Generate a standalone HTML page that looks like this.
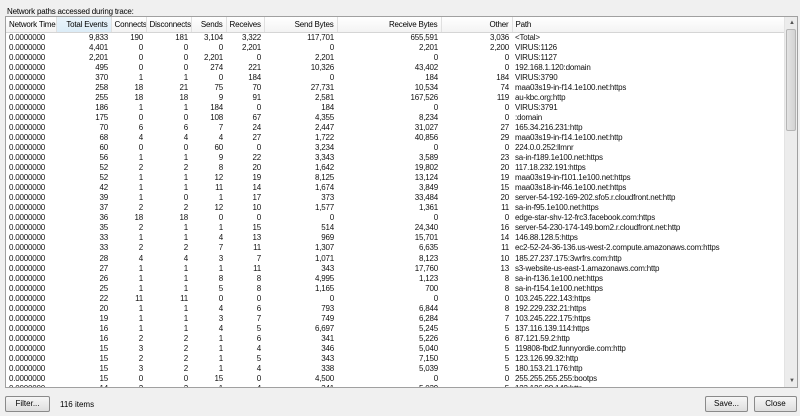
<!DOCTYPE html>
<html><head><meta charset="utf-8"><style>
*{margin:0;padding:0;box-sizing:border-box}
body{width:800px;height:416px;background:#f0f0f0;font-family:"Liberation Sans",sans-serif;font-size:8px;color:#000;position:relative;overflow:hidden}
.lbl{position:absolute;left:7px;top:7px;font-size:8px;letter-spacing:-0.2px}
.box{position:absolute;left:5px;top:16px;width:793px;height:372px;background:#fff;border:1px solid #a0a0a0;overflow:hidden}
table{border-collapse:collapse;table-layout:fixed;position:absolute;left:0;top:0;width:778px}
td,th{white-space:nowrap;overflow:hidden;padding:0 3px;letter-spacing:-0.2px;font-weight:normal}
th{height:15px;background:linear-gradient(#fff,#f3f3f3);border-right:1px solid #e0e0e0;border-bottom:1px solid #d5d5d5;text-align:right}
th.s{background:linear-gradient(#eaf4fb,#dcecf7)}
td{height:10.05px;line-height:10px;text-align:right;color:#111}
td:first-child,th:first-child,td:last-child,th:last-child{text-align:left}
.sb{position:absolute;right:0;top:0;width:13px;height:370px;background:#ececec;border-left:1px solid #e3e3e3}
.th{position:absolute;left:1px;right:1px;top:12px;height:102px;background:linear-gradient(90deg,#e4e4e4,#d2d2d2);border:1px solid #b5b5b5;border-radius:2px}
.btn{position:absolute;top:396px;height:16px;border:1px solid #8a8a8a;border-radius:2px;background:linear-gradient(#f6f6f6,#dedede);text-align:center;line-height:14px;font-size:8px}
</style></head><body>
<div class="lbl">Network paths accessed during trace:</div>
<div class="box">
<table>
<colgroup><col style="width:50px"><col style="width:55px"><col style="width:35px"><col style="width:45px"><col style="width:35px"><col style="width:38px"><col style="width:73px"><col style="width:104px"><col style="width:71px"><col style="width:272px"></colgroup>
<tr><th>Network Time</th><th class="s">Total Events</th><th>Connects</th><th>Disconnects</th><th>Sends</th><th>Receives</th><th>Send Bytes</th><th>Receive Bytes</th><th>Other</th><th>Path</th></tr>
<tr><td>0.0000000</td><td>9,833</td><td>190</td><td>181</td><td>3,104</td><td>3,322</td><td>117,701</td><td>655,591</td><td>3,036</td><td>&lt;Total&gt;</td></tr>
<tr><td>0.0000000</td><td>4,401</td><td>0</td><td>0</td><td>0</td><td>2,201</td><td>0</td><td>2,201</td><td>2,200</td><td>VIRUS:1126</td></tr>
<tr><td>0.0000000</td><td>2,201</td><td>0</td><td>0</td><td>2,201</td><td>0</td><td>2,201</td><td>0</td><td>0</td><td>VIRUS:1127</td></tr>
<tr><td>0.0000000</td><td>495</td><td>0</td><td>0</td><td>274</td><td>221</td><td>10,326</td><td>43,402</td><td>0</td><td>192.168.1.120:domain</td></tr>
<tr><td>0.0000000</td><td>370</td><td>1</td><td>1</td><td>0</td><td>184</td><td>0</td><td>184</td><td>184</td><td>VIRUS:3790</td></tr>
<tr><td>0.0000000</td><td>258</td><td>18</td><td>21</td><td>75</td><td>70</td><td>27,731</td><td>10,534</td><td>74</td><td>maa03s19-in-f14.1e100.net:https</td></tr>
<tr><td>0.0000000</td><td>255</td><td>18</td><td>18</td><td>9</td><td>91</td><td>2,581</td><td>167,526</td><td>119</td><td>au-kbc.org:http</td></tr>
<tr><td>0.0000000</td><td>186</td><td>1</td><td>1</td><td>184</td><td>0</td><td>184</td><td>0</td><td>0</td><td>VIRUS:3791</td></tr>
<tr><td>0.0000000</td><td>175</td><td>0</td><td>0</td><td>108</td><td>67</td><td>4,355</td><td>8,234</td><td>0</td><td>:domain</td></tr>
<tr><td>0.0000000</td><td>70</td><td>6</td><td>6</td><td>7</td><td>24</td><td>2,447</td><td>31,027</td><td>27</td><td>165.34.216.231:http</td></tr>
<tr><td>0.0000000</td><td>68</td><td>4</td><td>4</td><td>4</td><td>27</td><td>1,722</td><td>40,856</td><td>29</td><td>maa03s19-in-f14.1e100.net:http</td></tr>
<tr><td>0.0000000</td><td>60</td><td>0</td><td>0</td><td>60</td><td>0</td><td>3,234</td><td>0</td><td>0</td><td>224.0.0.252:llmnr</td></tr>
<tr><td>0.0000000</td><td>56</td><td>1</td><td>1</td><td>9</td><td>22</td><td>3,343</td><td>3,589</td><td>23</td><td>sa-in-f189.1e100.net:https</td></tr>
<tr><td>0.0000000</td><td>52</td><td>2</td><td>2</td><td>8</td><td>20</td><td>1,642</td><td>19,802</td><td>20</td><td>117.18.232.191:https</td></tr>
<tr><td>0.0000000</td><td>52</td><td>1</td><td>1</td><td>12</td><td>19</td><td>8,125</td><td>13,124</td><td>19</td><td>maa03s19-in-f101.1e100.net:https</td></tr>
<tr><td>0.0000000</td><td>42</td><td>1</td><td>1</td><td>11</td><td>14</td><td>1,674</td><td>3,849</td><td>15</td><td>maa03s18-in-f46.1e100.net:https</td></tr>
<tr><td>0.0000000</td><td>39</td><td>1</td><td>0</td><td>1</td><td>17</td><td>373</td><td>33,484</td><td>20</td><td>server-54-192-169-202.sfo5.r.cloudfront.net:http</td></tr>
<tr><td>0.0000000</td><td>37</td><td>2</td><td>2</td><td>12</td><td>10</td><td>1,577</td><td>1,361</td><td>11</td><td>sa-in-f95.1e100.net:https</td></tr>
<tr><td>0.0000000</td><td>36</td><td>18</td><td>18</td><td>0</td><td>0</td><td>0</td><td>0</td><td>0</td><td>edge-star-shv-12-frc3.facebook.com:https</td></tr>
<tr><td>0.0000000</td><td>35</td><td>2</td><td>1</td><td>1</td><td>15</td><td>514</td><td>24,340</td><td>16</td><td>server-54-230-174-149.bom2.r.cloudfront.net:http</td></tr>
<tr><td>0.0000000</td><td>33</td><td>1</td><td>1</td><td>4</td><td>13</td><td>969</td><td>15,701</td><td>14</td><td>146.88.128.5:https</td></tr>
<tr><td>0.0000000</td><td>33</td><td>2</td><td>2</td><td>7</td><td>11</td><td>1,307</td><td>6,635</td><td>11</td><td>ec2-52-24-36-136.us-west-2.compute.amazonaws.com:https</td></tr>
<tr><td>0.0000000</td><td>28</td><td>4</td><td>4</td><td>3</td><td>7</td><td>1,071</td><td>8,123</td><td>10</td><td>185.27.237.175:3wrfrs.com:http</td></tr>
<tr><td>0.0000000</td><td>27</td><td>1</td><td>1</td><td>1</td><td>11</td><td>343</td><td>17,760</td><td>13</td><td>s3-website-us-east-1.amazonaws.com:http</td></tr>
<tr><td>0.0000000</td><td>26</td><td>1</td><td>1</td><td>8</td><td>8</td><td>4,995</td><td>1,123</td><td>8</td><td>sa-in-f136.1e100.net:https</td></tr>
<tr><td>0.0000000</td><td>25</td><td>1</td><td>1</td><td>5</td><td>8</td><td>1,165</td><td>700</td><td>8</td><td>sa-in-f154.1e100.net:https</td></tr>
<tr><td>0.0000000</td><td>22</td><td>11</td><td>11</td><td>0</td><td>0</td><td>0</td><td>0</td><td>0</td><td>103.245.222.143:https</td></tr>
<tr><td>0.0000000</td><td>20</td><td>1</td><td>1</td><td>4</td><td>6</td><td>793</td><td>6,844</td><td>8</td><td>192.229.232.21:https</td></tr>
<tr><td>0.0000000</td><td>19</td><td>1</td><td>1</td><td>3</td><td>7</td><td>749</td><td>6,284</td><td>7</td><td>103.245.222.175:https</td></tr>
<tr><td>0.0000000</td><td>16</td><td>1</td><td>1</td><td>4</td><td>5</td><td>6,697</td><td>5,245</td><td>5</td><td>137.116.139.114:https</td></tr>
<tr><td>0.0000000</td><td>16</td><td>2</td><td>2</td><td>1</td><td>6</td><td>341</td><td>5,226</td><td>6</td><td>87.121.59.2:http</td></tr>
<tr><td>0.0000000</td><td>15</td><td>3</td><td>2</td><td>1</td><td>4</td><td>346</td><td>5,040</td><td>5</td><td>119808-fbd2.funnyordie.com:http</td></tr>
<tr><td>0.0000000</td><td>15</td><td>2</td><td>2</td><td>1</td><td>5</td><td>343</td><td>7,150</td><td>5</td><td>123.126.99.32:http</td></tr>
<tr><td>0.0000000</td><td>15</td><td>3</td><td>2</td><td>1</td><td>4</td><td>338</td><td>5,039</td><td>5</td><td>180.153.21.176:http</td></tr>
<tr><td>0.0000000</td><td>15</td><td>0</td><td>0</td><td>15</td><td>0</td><td>4,500</td><td>0</td><td>0</td><td>255.255.255.255:bootps</td></tr>
<tr><td>0.0000000</td><td>14</td><td>2</td><td>2</td><td>1</td><td>4</td><td>341</td><td>5,039</td><td>5</td><td>123.126.98.149:http</td></tr>
</table>
<div class="sb"><div style="position:absolute;top:3px;left:4px;font-size:6px;color:#555">▲</div><div class="th"></div><div style="position:absolute;bottom:3px;left:4px;font-size:6px;color:#555">▼</div></div>
</div>
<div class="btn" style="left:5px;width:45px">Filter...</div>
<div style="position:absolute;left:60px;top:400px">116 items</div>
<div class="btn" style="left:705px;width:43px">Save...</div>
<div class="btn" style="left:754px;width:43px">Close</div>
</body></html>
